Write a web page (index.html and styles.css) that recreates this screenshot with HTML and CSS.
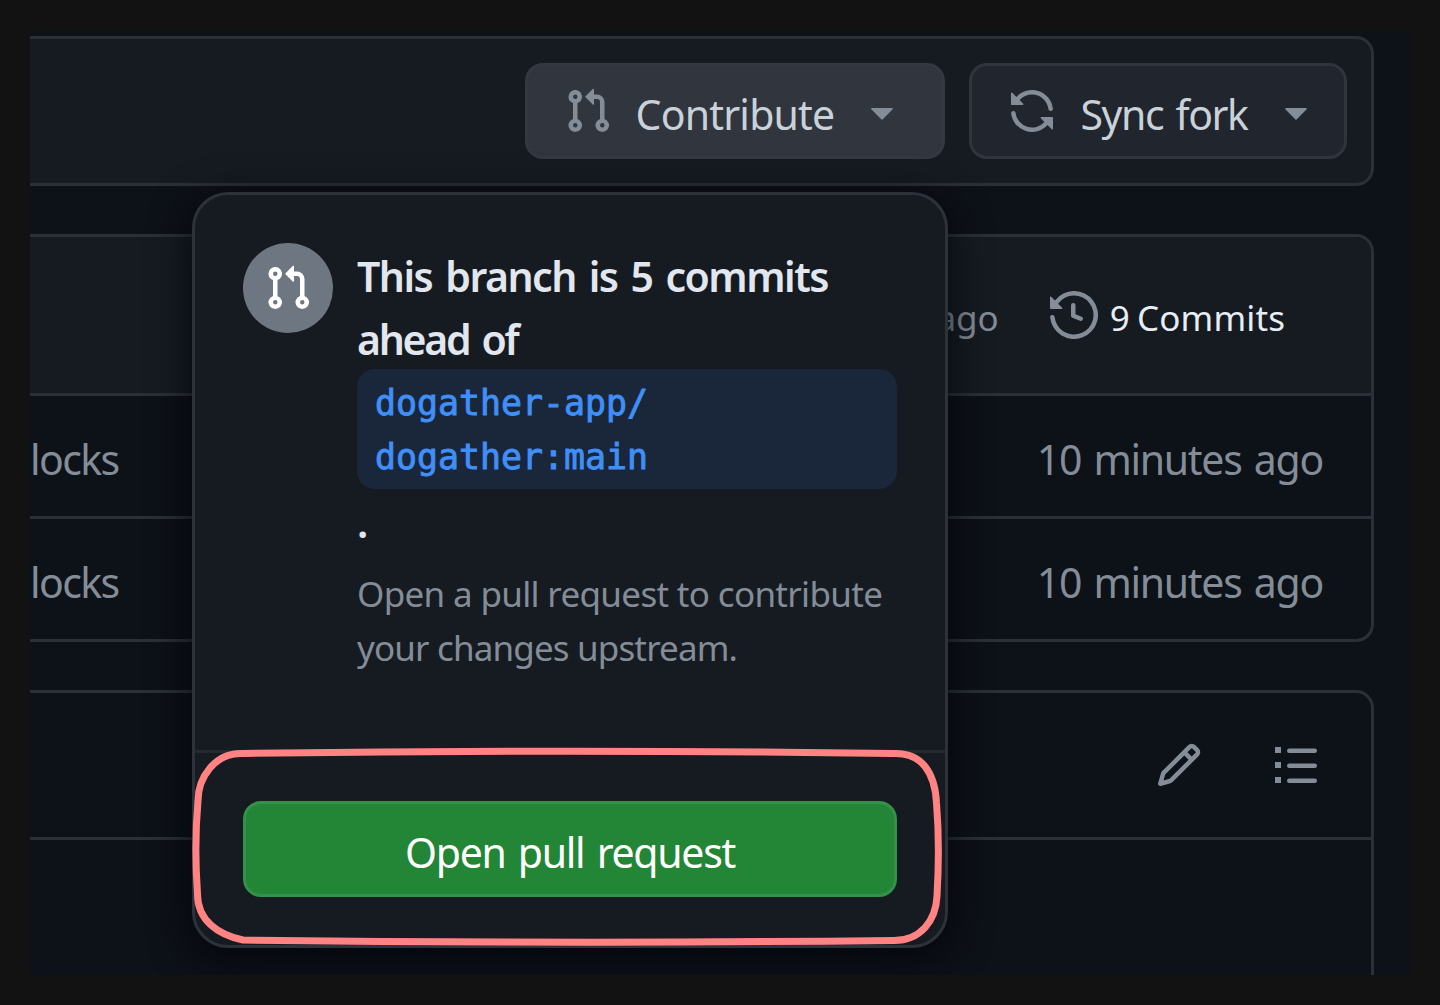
FILE: index.html
```html
<!DOCTYPE html>
<html lang="en">
<head>
<meta charset="utf-8">
<title>Contribute</title>
<link rel="stylesheet" href="styles.css">
</head>
<body>
<svg class="defs" aria-hidden="true">
  <symbol id="pr" viewBox="0 0 16 16"><path d="M1.5 3.25a2.25 2.25 0 1 1 3 2.122v5.256a2.251 2.251 0 1 1-1.5 0V5.372A2.25 2.25 0 0 1 1.5 3.25Zm5.677-.177L9.573.677A.25.25 0 0 1 10 .854V2.5h1A2.5 2.5 0 0 1 13.5 5v5.628a2.251 2.251 0 1 1-1.5 0V5a1 1 0 0 0-1-1h-1v1.646a.25.25 0 0 1-.427.177L7.177 3.427a.25.25 0 0 1 0-.354ZM3.75 2.5a.75.75 0 1 0 0 1.5.75.75 0 0 0 0-1.5Zm0 9.5a.75.75 0 1 0 0 1.5.75.75 0 0 0 0-1.5Zm8.25.75a.75.75 0 1 0 1.5 0 .75.75 0 0 0-1.5 0Z"/></symbol>
  <symbol id="caret" viewBox="0 0 16 16"><path d="m4.427 7.427 3.396 3.396a.25.25 0 0 0 .354 0l3.396-3.396A.25.25 0 0 0 11.396 7H4.604a.25.25 0 0 0-.177.427Z"/></symbol>
  <symbol id="sync" viewBox="0 0 16 16"><path d="M1.705 8.005a.75.75 0 0 1 .834.656 5.5 5.5 0 0 0 9.592 2.97l-1.204-1.204a.25.25 0 0 1 .177-.427h3.646a.25.25 0 0 1 .25.25v3.646a.25.25 0 0 1-.427.177l-1.38-1.38A7.002 7.002 0 0 1 1.05 8.84a.75.75 0 0 1 .656-.834ZM8 2.5a5.487 5.487 0 0 0-4.131 1.869l1.204 1.204A.25.25 0 0 1 4.896 6H1.25A.25.25 0 0 1 1 5.75V2.104a.25.25 0 0 1 .427-.177l1.38 1.38A7.002 7.002 0 0 1 14.95 7.16a.75.75 0 0 1-1.49.178A5.5 5.5 0 0 0 8 2.5Z"/></symbol>
  <symbol id="history" viewBox="0 0 16 16"><path d="m.427 1.927 1.215 1.215a8.002 8.002 0 1 1-1.6 5.685.75.75 0 1 1 1.493-.154 6.5 6.5 0 1 0 1.18-4.458l1.358 1.358A.25.25 0 0 1 3.896 6H.25A.25.25 0 0 1 0 5.75V2.104a.25.25 0 0 1 .427-.177ZM7.75 4a.75.75 0 0 1 .75.75v2.992l2.028.812a.75.75 0 0 1-.557 1.392l-2.5-1A.751.751 0 0 1 7 8.25v-3.5A.75.75 0 0 1 7.75 4Z"/></symbol>
  <symbol id="pencil" viewBox="0 0 16 16"><path d="M11.013 1.427a1.75 1.75 0 0 1 2.474 0l1.086 1.086a1.75 1.75 0 0 1 0 2.474l-8.61 8.61c-.21.21-.47.364-.756.445l-3.251.93a.75.75 0 0 1-.927-.928l.929-3.25c.081-.286.235-.547.445-.758l8.61-8.61Zm.176 4.823L9.75 4.81l-6.286 6.287a.253.253 0 0 0-.064.108l-.558 1.953 1.953-.558a.253.253 0 0 0 .108-.064Zm1.238-3.763a.25.25 0 0 0-.354 0L10.811 3.75l1.439 1.44 1.263-1.263a.25.25 0 0 0 0-.354Z"/></symbol>
  <symbol id="list" viewBox="0 0 16 16"><path d="M5.75 2.5h8.5a.75.75 0 0 1 0 1.5h-8.5a.75.75 0 0 1 0-1.5Zm0 5h8.5a.75.75 0 0 1 0 1.5h-8.5a.75.75 0 0 1 0-1.5Zm0 5h8.5a.75.75 0 0 1 0 1.5h-8.5a.75.75 0 0 1 0-1.5ZM1 2h2v2H1Zm0 5h2v2H1Zm0 5h2v2H1Z"/></symbol>
</svg>
<main class="frame">
  <section class="panel bar">
    <button class="btn btn-active"><svg class="icon"><use href="#pr"/></svg><span class="label">Contribute</span><svg class="icon"><use href="#caret"/></svg></button>
    <button class="btn btn-sync"><svg class="icon"><use href="#sync"/></svg><span class="label label-sync">Sync fork</span><svg class="icon"><use href="#caret"/></svg></button>
  </section>
  <section class="panel files">
    <div class="files-head"><span class="ago">ago</span><svg class="icon"><use href="#history"/></svg><span class="commits">9 Commits</span></div>
    <div class="row"><span class="msg">locks</span><span class="time">10 minutes ago</span></div>
    <div class="row"><span class="msg">locks</span><span class="time">10 minutes ago</span></div>
  </section>
  <section class="panel readme">
    <div class="readme-head"><svg class="icon"><use href="#pencil"/></svg><svg class="icon"><use href="#list"/></svg></div>
  </section>
  <aside class="popover">
    <div class="info">
      <div class="badge"><svg class="icon"><use href="#pr"/></svg></div>
      <div class="copy">
        <div class="title">This branch is 5 commits<br><span class="title-end">ahead of</span></div>
        <div class="branch">dogather-app/<br>dogather:main</div>
        <div class="title dot">.</div>
        <p class="desc">Open a pull request to contribute<br><span class="desc-end">your changes upstream.</span></p>
      </div>
    </div>
    <div class="action"><button class="primary">Open pull request</button></div>
    <svg class="highlight" viewBox="192 740 756 210"><path d="M243 752.5Q570 748 893 752.5C922 751 935 772 936.500 802Q940 845 937 895C936 920 920 940 893 939.500Q570 943 243 939C219 934 197 920 197.500 892Q194 845 198 800C198 777 215 751 243 752.5Z"/></svg>
  </aside>
</main>
</body>
</html>
```
FILE: styles.css
```css
* { box-sizing: border-box; }
body { margin: 0; background: #121212; font-family: "Noto Sans", sans-serif; }
button { font: inherit; padding: 0; white-space: nowrap; }
.defs { display: none; }
.icon { width: 48px; height: 48px; flex: none; fill: #848d97; display: block; }

.frame {
  position: relative; width: 1380px; height: 945px; margin: 30px;
  padding: 6px 36px 0 0; overflow: hidden; background: #0d1118;
  display: flex; flex-direction: column; gap: 48px;
}
.panel { border: 3px solid #2b3038; border-left: 0; border-radius: 0 18px 18px 0; flex: none; }

.bar { height: 150px; background: #161b22; display: flex; justify-content: flex-end; gap: 24px; padding: 24px 24px 0 0; }
.btn {
  height: 96px; border: 3px solid #30343c; border-radius: 18px; background: #21252d;
  color: #c9d1d9; display: flex; align-items: center; padding: 0 36px; width: 378px; justify-content: space-between;
}
.btn-active { width: 420px; background: #31353e; border-color: #343841; }
.btn-sync { padding-right: 24px; }
.label { font-size: 41px; letter-spacing: -0.8px; line-height: 60px; padding-top: 6px; }
.label-sync { letter-spacing: -1.4px; word-spacing: 3px; }

.files { height: 408px; color: #848d97; }
.files-head { height: 156px; background: #161b22; border-radius: 0 15px 0 0; display: flex; align-items: center; justify-content: flex-end; padding: 0 86px 0 0; font-size: 35px; }
.ago { margin-right: 51px; padding-top: 4px; }
.commits { color: #e6edf3; margin-left: 12px; letter-spacing: 0.1px; word-spacing: -2px; padding-top: 4px; }
.row { height: 123px; border-top: 3px solid #2b3038; display: flex; justify-content: space-between; align-items: center; padding: 5px 48px 0 0; font-size: 41px; }
.msg { letter-spacing: -1.6px; }
.time { letter-spacing: -1.3px; word-spacing: 3px; }

.readme { height: 300px; border-bottom: 0; border-radius: 0 18px 0 0; }
.readme-head { height: 147px; border-bottom: 3px solid #2b3038; display: flex; justify-content: flex-end; gap: 69px; padding: 48px 51px 0 0; }

.popover {
  position: absolute; left: 162px; top: 162px; width: 756px; height: 756px;
  border: 3px solid #2d3139; border-radius: 36px; background: #161b22;
  box-shadow: 0 9px 42px rgba(1, 4, 9, .85);
}
.info { height: 558px; border-bottom: 3px solid #242930; display: flex; gap: 24px; padding: 48px; }
.badge { width: 90px; height: 90px; border-radius: 50%; background: #6e7681; display: grid; place-items: center; flex: none; }
.badge .icon { fill: #fff; }
.copy { width: 540px; white-space: nowrap; padding-top: 2px; }
.title { font-size: 41px; font-weight: 600; line-height: 63px; letter-spacing: -1.5px; word-spacing: 3.8px; color: #e2e7ef; }
.title-end { letter-spacing: -2.3px; }
.branch {
  height: 120px; margin-top: -2px; padding: 7px 18px 5px; border-radius: 18px; background: #1a2639; color: #3f8ff7;
  font: 34.9px/54px "DejaVu Sans Mono", monospace; -webkit-text-stroke: 0.9px #3f8ff7;
}
.dot { height: 63px; padding-top: 2px; }
.desc { margin: 15px 0 0; font-size: 35px; line-height: 54px; color: #848d97; letter-spacing: -0.67px; }
.desc-end { letter-spacing: -0.85px; }
.action { padding: 48px; }
.primary {
  display: block; width: 654px; height: 96px; border: 3px solid #34914a; border-radius: 18px;
  background: #238636; color: #fff; font-size: 41px; letter-spacing: -1.3px; word-spacing: 3px; padding-top: 6px;
}
.highlight { position: absolute; left: -3px; top: 546px; width: 756px; height: 210px; fill: none; stroke: #ff8383; stroke-width: 7px; overflow: visible; }
```
